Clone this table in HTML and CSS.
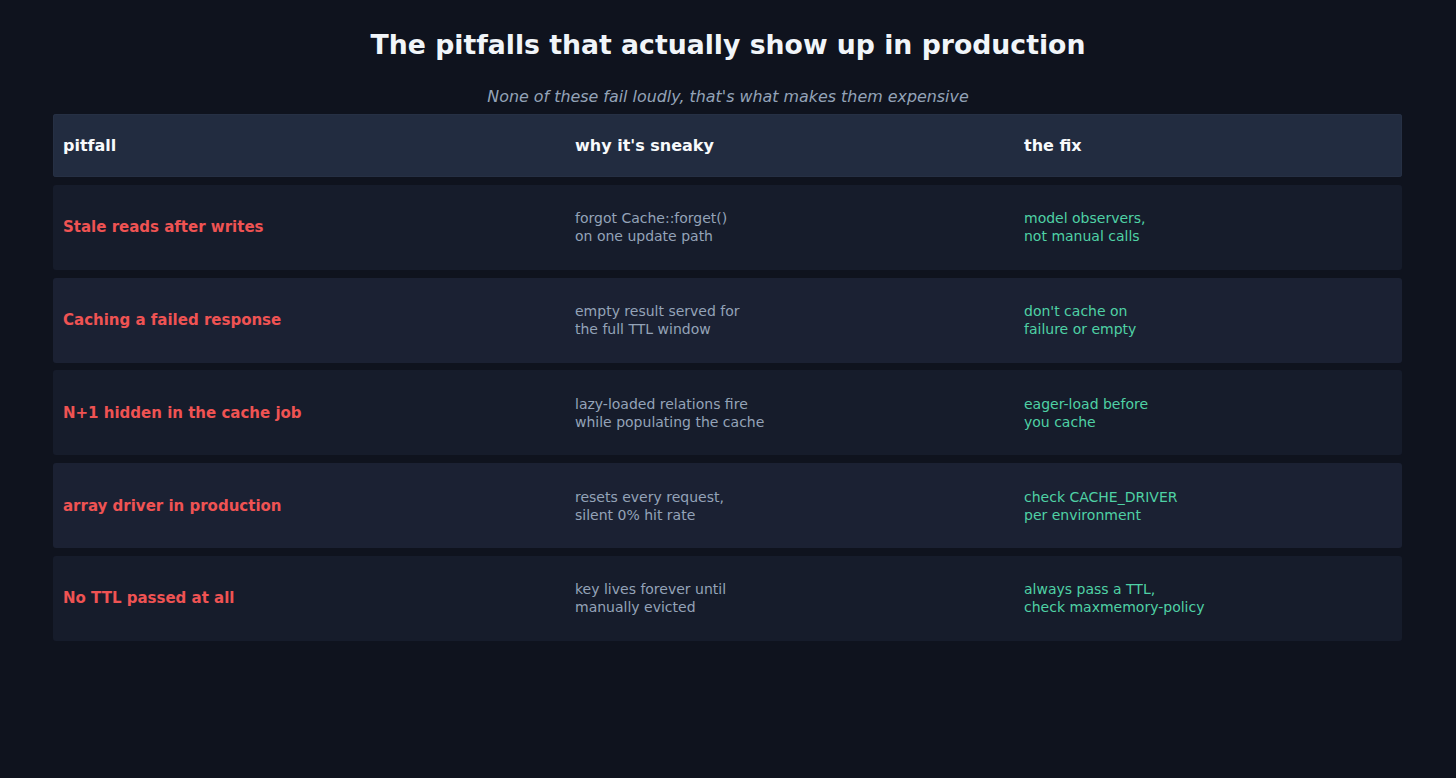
FILE: index.html
```html
<!DOCTYPE html>
<html lang="en">
<head>
<meta charset="utf-8">
<title>Pitfalls</title>
<link rel="stylesheet" href="styles.css">
</head>
<body>
<main class="page">
  <h1 class="title">The pitfalls that actually show up in production</h1>
  <p class="subtitle">None of these fail loudly, that's what makes them expensive</p>
  <div class="table">
    <div class="row head">
      <div class="cell">pitfall</div>
      <div class="cell">why it's sneaky</div>
      <div class="cell">the fix</div>
    </div>
    <div class="row odd">
      <div class="cell pit">Stale reads after writes</div>
      <div class="cell why">forgot Cache::forget()<br>on one update path</div>
      <div class="cell fix">model observers,<br>not manual calls</div>
    </div>
    <div class="row even">
      <div class="cell pit">Caching a failed response</div>
      <div class="cell why">empty result served for<br>the full TTL window</div>
      <div class="cell fix">don't cache on<br>failure or empty</div>
    </div>
    <div class="row odd">
      <div class="cell pit">N+1 hidden in the cache job</div>
      <div class="cell why">lazy-loaded relations fire<br>while populating the cache</div>
      <div class="cell fix">eager-load before<br>you cache</div>
    </div>
    <div class="row even">
      <div class="cell pit">array driver in production</div>
      <div class="cell why">resets every request,<br>silent 0% hit rate</div>
      <div class="cell fix">check CACHE_DRIVER<br>per environment</div>
    </div>
    <div class="row odd">
      <div class="cell pit">No TTL passed at all</div>
      <div class="cell why">key lives forever until<br>manually evicted</div>
      <div class="cell fix">always pass a TTL,<br>check maxmemory-policy</div>
    </div>
  </div>
</main>
</body>
</html>
```
FILE: styles.css
```css
html, body {
  margin: 0;
  padding: 0;
  background: #0f131e;
}
body {
  font-family: "DejaVu Sans", "Liberation Sans", sans-serif;
  color: #f1f5f9;
  min-height: 778px;
}
.page {
  padding-top: 29px;
}
.title {
  margin: 0;
  text-align: center;
  font-size: 26.7px;
  line-height: 31px;
  font-weight: bold;
  color: #f1f5f9;
}
.subtitle {
  margin: 27px 0 0;
  text-align: center;
  font-size: 15.9px;
  line-height: 19px;
  font-style: italic;
  color: #94a3b8;
}
.table {
  width: 1349px;
  margin: 8px 0 0 53px;
  display: flex;
  flex-direction: column;
  gap: 7.75px;
}
.row {
  display: grid;
  grid-template-columns: 512px 449px 1fr;
  align-items: center;
  border-radius: 3px;
  height: 85px;
}
.row.head {
  height: 63px;
  background: #222c40;
  box-shadow: inset 0 0 0 1px #263044;
  font-weight: bold;
  font-size: 16px;
  color: #f8fafc;
}
.row.odd { background: #161c2b; }
.row.even { background: #1b2133; }
.cell {
  padding-left: 10px;
}
.pit {
  font-weight: bold;
  font-size: 15px;
  color: #ef5353;
}
.why {
  font-size: 14px;
  line-height: 18px;
  color: #94a3b8;
}
.fix {
  font-size: 14px;
  line-height: 18px;
  color: #4fd1a5;
}
```
